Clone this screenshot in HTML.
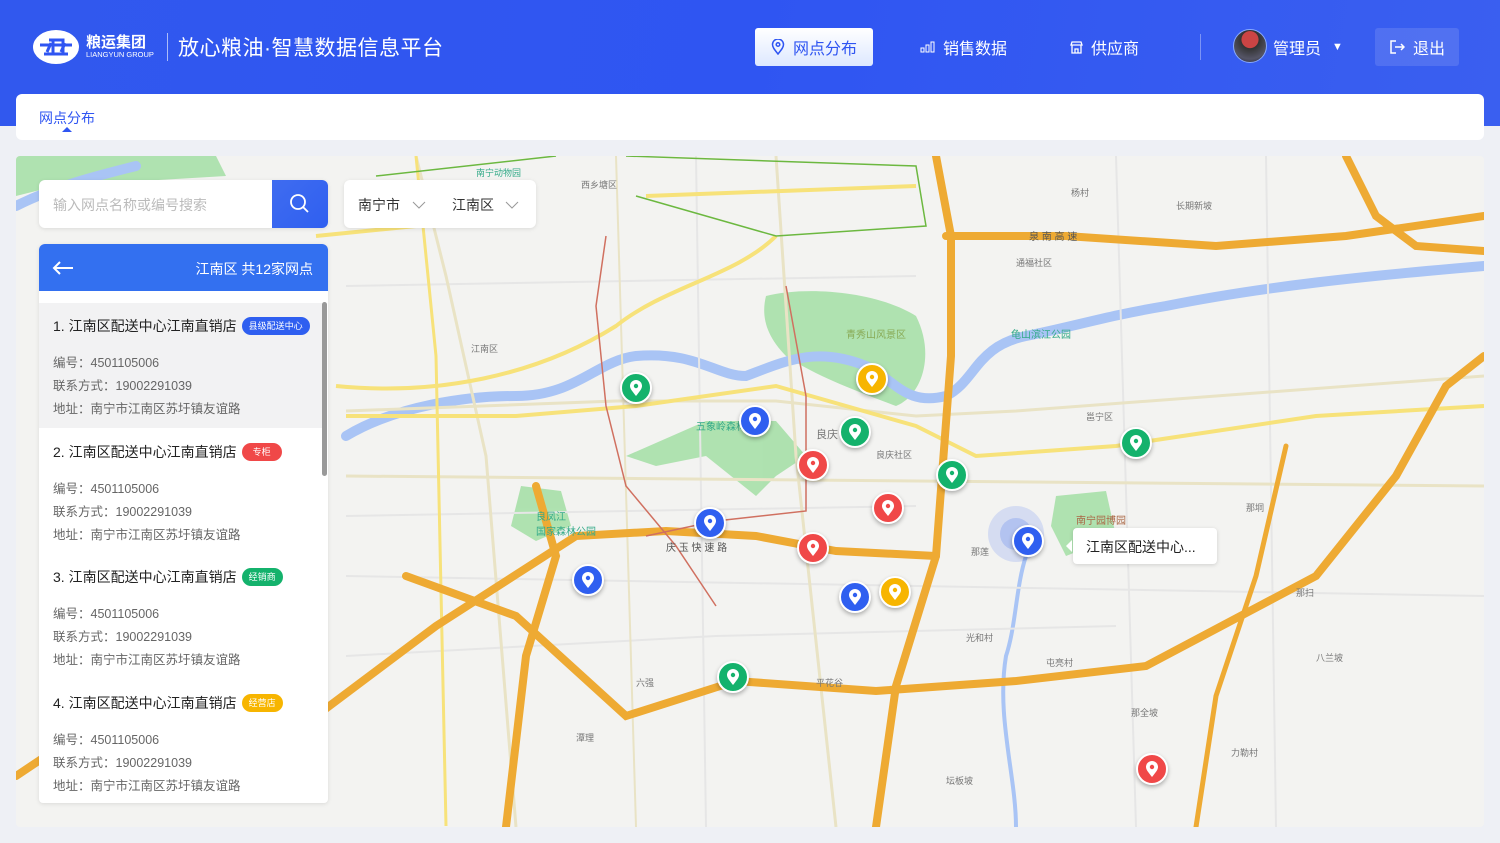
<!DOCTYPE html>
<html><head><meta charset="utf-8"><style>
*{margin:0;padding:0;box-sizing:border-box}
body{width:1500px;height:843px;overflow:hidden;background:#eef0f5;font-family:"Liberation Sans","Noto Sans CJK SC",sans-serif;position:relative}
.hdr{position:absolute;left:0;top:0;width:1500px;height:126px;background:linear-gradient(100deg,#3158ee 0%,#2f55f2 50%,#3a5ff0 100%)}
.logo{position:absolute;left:32px;top:28px;color:#fff}
.title{position:absolute;left:178px;top:32px;color:#fff;font-size:21px;letter-spacing:0.5px}
.sep{position:absolute;left:167px;top:33px;width:1px;height:28px;background:rgba(255,255,255,.6)}
.nav{position:absolute;top:28px;height:38px;color:#fff;font-size:16px;display:flex;align-items:center}
.tabbar{position:absolute;left:16px;top:94px;width:1468px;height:46px;background:#fff;border-radius:6px}
.map{position:absolute;left:16px;top:156px;width:1468px;height:671px;background:#f3f3f1;overflow:hidden;border-radius:4px}
.mk{position:absolute;width:32px;height:32px;border-radius:50%;border:2px solid #fff;box-shadow:0 2px 4px rgba(0,0,0,.3);display:flex;align-items:center;justify-content:center}
.g{background:#14b26c}.y{background:#f7b500}.b{background:#2f5ff0}.r{background:#f04848}
.item{position:absolute;left:39px;width:283px;padding-left:14px;color:#666;font-size:12.5px}
.item h4{font-size:14px;color:#222;font-weight:normal;display:flex;align-items:center}
.tag{display:inline-block;font-size:9px;color:#fff;border-radius:9px;padding:3px 7px;margin-left:5px;line-height:12px}
.item p{margin-top:8px;line-height:15px}
.lbl{position:absolute;font-size:9px;color:#777}
</style></head><body>
<div class="hdr"></div>
<div class="logo">
<svg width="50" height="38" viewBox="0 0 50 38"><ellipse cx="24" cy="19" rx="23" ry="17" fill="#fff"/><path d="M8 17h32M12 26h24M17 12h14v14M21 12v14M15 24l4-9M29 24l4-9" stroke="#2f55f2" stroke-width="3" fill="none"/></svg>
<div style="position:absolute;left:54px;top:3px;font-size:15px;font-weight:bold;white-space:nowrap">粮运集团</div>
<div style="position:absolute;left:54px;top:22px;font-size:7.5px;white-space:nowrap">LIANGYUN GROUP</div>
</div>
<div class="sep"></div>
<div class="title">放心粮油·智慧数据信息平台</div>
<div class="nav" style="left:755px;width:118px;background:linear-gradient(#fff,#dde8ff);border-radius:3px;color:#2f55f2;justify-content:center;font-size:16px">
<svg width="14" height="16" viewBox="0 0 14 16" style="margin-right:8px"><path d="M7 15C3 10 1.5 8 1.5 5.5a5.5 5.5 0 0 1 11 0C12.5 8 11 10 7 15z" fill="none" stroke="#2f55f2" stroke-width="1.5"/><circle cx="7" cy="5.5" r="1.8" fill="none" stroke="#2f55f2" stroke-width="1.5"/></svg>网点分布</div>
<div class="nav" style="left:920px"><svg width="16" height="12" style="margin-right:7px"><rect x="1" y="7" width="3" height="4" fill="none" stroke="#fff"/><rect x="6" y="4" width="3" height="7" fill="none" stroke="#fff"/><rect x="11" y="1" width="3" height="10" fill="none" stroke="#fff"/></svg>销售数据</div>
<div class="nav" style="left:1069px"><svg width="15" height="14" style="margin-right:7px"><path d="M2 5h11l-1-3H3zM3 5v8h9V5M6 13V9h3v4" fill="none" stroke="#fff" stroke-width="1.3"/></svg>供应商</div>
<div style="position:absolute;left:1200px;top:34px;width:1px;height:26px;background:rgba(255,255,255,.35)"></div>
<div style="position:absolute;left:1233px;top:29px;width:34px;height:34px;border-radius:50%;background:radial-gradient(circle at 50% 30%,#c44 0 30%,#333 32%,#556 70%,#223);border:1px solid #8af"></div>
<div class="nav" style="left:1273px">管理员<span style="font-size:11px;margin-left:11px">▼</span></div>
<div class="nav" style="left:1375px;width:84px;background:rgba(255,255,255,.12);border-radius:3px;justify-content:center"><svg width="16" height="16" style="margin-right:8px"><path d="M7 2H2v12h5M6 8h9M12 5l3 3-3 3" fill="none" stroke="#fff" stroke-width="1.5"/></svg>退出</div>
<div class="tabbar"><div style="position:absolute;left:23px;top:14px;font-size:14px;color:#2f55f2">网点分布</div><div style="position:absolute;left:46px;top:33px;width:0;height:0;border:5px solid transparent;border-bottom-color:#2f55f2;border-top:0"></div></div>

<div class="map">
<svg width="1468" height="671" style="position:absolute;left:0;top:0">
<g fill="#a7e0a8" opacity=".9">
<path d="M750 140 C790 130 860 135 900 160 C920 200 905 240 880 250 C840 235 800 220 770 200 C750 180 745 160 750 140z"/>
<path d="M610 300 L690 265 L760 265 L790 300 L760 320 L740 340 L690 300 L640 310z"/>
<path d="M505 330 L545 335 L555 370 L520 385 L495 370z"/>
<path d="M1040 340 L1090 335 L1100 380 L1050 400 L1035 370z"/>
<path d="M0 0 L200 0 L210 20 L40 30 L0 40z"/>
</g>
<g fill="none" stroke="#a9c4f5" stroke-width="10" stroke-linecap="round">
<path d="M330 280 C380 250 450 240 500 240 C560 240 580 205 620 200 C680 195 700 220 730 220 C770 205 800 190 850 210 C880 225 890 250 930 240 C960 225 960 190 1010 180 C1060 170 1090 160 1150 150 C1250 130 1350 120 1468 110"/>
<path d="M0 50 C40 30 80 20 120 10"/>
<path d="M1010 400 C1000 430 1000 470 990 500 C980 560 1000 620 1000 671" stroke-width="4"/>
</g>
<g fill="none" stroke="#e6e6e6" stroke-width="2">
<path d="M330 420 L1468 440"/><path d="M330 500 L700 480 L1100 470"/><path d="M1100 0 L1120 671"/><path d="M1250 0 L1260 671"/><path d="M680 0 L690 671"/><path d="M330 360 L900 350"/><path d="M330 130 L900 120"/>
</g>
<g fill="none" stroke="#e9e3c5" stroke-width="3">
<path d="M330 255 L600 245 L760 245 L900 260 L1000 255 L1468 220"/>
<path d="M400 0 L430 120 L470 300 L500 671"/>
<path d="M760 0 L780 300 L820 671"/>
<path d="M330 320 L1468 330"/>
<path d="M600 0 L620 671" stroke-width="2"/>
</g>
<g fill="none" stroke="#f7e27a" stroke-width="4">
<path d="M320 230 C420 240 520 220 600 170 C650 130 720 120 760 80"/>
<path d="M330 260 L500 260 L620 250 L760 230 L900 270 L960 300 L1100 290 L1300 260 L1468 250"/>
<path d="M400 0 L420 200 L430 670" stroke-width="3"/>
<path d="M630 40 L900 30"/>
<path d="M300 80 L400 70 L480 60"/>
</g>
<g fill="none" stroke="#eeaa33" stroke-width="8" stroke-linecap="round">
<path d="M920 0 L935 80 L935 200 L920 400 L880 530 L860 671"/>
<path d="M930 80 L1050 80 L1200 90 L1330 80 L1468 60"/>
<path d="M300 560 L420 470 L560 380 L650 375 L740 380 L820 395 L920 400"/>
<path d="M390 420 L500 460 L610 560 L720 525 L860 535 L1000 525 L1130 510 L1300 420 L1380 320 L1430 230 L1468 200"/>
<path d="M1330 0 L1360 60 L1400 90 L1468 95"/>
<path d="M520 330 L540 400 L510 500 L490 671"/>
<path d="M0 620 L120 540 L200 460 L300 380"/>
<path d="M1270 290 L1240 420 L1200 540 L1180 671" stroke-width="5"/>
</g>
<g fill="none" stroke="#d07060" stroke-width="1.5">
<path d="M590 80 L580 150 L590 250 L610 330 L660 390 L700 450"/>
<path d="M770 130 L790 240 L790 310 L790 355 L700 365 L630 380"/>
</g>
<g fill="none" stroke="#6cb840" stroke-width="1.5"><path d="M360 20 L540 0 M610 0 L900 10 L910 70 L760 80 L620 40"/></g>
</svg>
<div class="lbl" style="left:455px;top:186px">江南区</div>
<div class="lbl" style="left:830px;top:170px;color:#8a5;font-size:10px">青秀山风景区</div>
<div class="lbl" style="left:995px;top:170px;color:#3a8;font-size:10px">龟山滨江公园</div>
<div class="lbl" style="left:680px;top:262px;color:#3a8;font-size:10px">五象岭森林公园</div>
<div class="lbl" style="left:800px;top:270px;font-size:11px">良庆</div>
<div class="lbl" style="left:860px;top:292px">良庆社区</div>
<div class="lbl" style="left:1060px;top:356px;color:#a64;font-size:10px">南宁园博园</div>
<div class="lbl" style="left:520px;top:352px;color:#3a8;font-size:10px">良凤江<br>国家森林公园</div>
<div class="lbl" style="left:650px;top:383px;font-size:10px;color:#555">庆 玉 快 速 路</div>
<div class="lbl" style="left:955px;top:389px">那莲</div>
<div class="lbl" style="left:1000px;top:100px">通福社区</div>
<div class="lbl" style="left:1013px;top:72px;font-size:10px;color:#555">泉 南 高 速</div>
<div class="lbl" style="left:1070px;top:254px">邕宁区</div>
<div class="lbl" style="left:565px;top:22px">西乡塘区</div>
<div class="lbl" style="left:460px;top:10px;color:#3a8">南宁动物园</div>
<div class="lbl" style="left:1230px;top:345px">那垌</div>
<div class="lbl" style="left:1280px;top:430px">那扫</div>
<div class="lbl" style="left:1300px;top:495px">八兰坡</div>
<div class="lbl" style="left:1030px;top:500px">屯亮村</div>
<div class="lbl" style="left:950px;top:475px">光和村</div>
<div class="lbl" style="left:800px;top:520px">平花谷</div>
<div class="lbl" style="left:620px;top:520px">六强</div>
<div class="lbl" style="left:560px;top:575px">潭理</div>
<div class="lbl" style="left:1115px;top:550px">那全坡</div>
<div class="lbl" style="left:1215px;top:590px">力勒村</div>
<div class="lbl" style="left:930px;top:618px">坛板坡</div>
<div class="lbl" style="left:1055px;top:30px">杨村</div>
<div class="lbl" style="left:1160px;top:43px">长期新坡</div>

<div style="position:absolute;left:972px;top:350px;width:56px;height:56px;border-radius:50%;background:rgba(47,95,240,.15)"></div>
<div style="position:absolute;left:984px;top:362px;width:32px;height:32px;border-radius:50%;background:rgba(47,95,240,.2)"></div>
<div style="position:absolute;left:1057px;top:372px;width:144px;height:36px;background:#fff;border-radius:4px;box-shadow:0 1px 4px rgba(0,0,0,.15);font-size:14px;color:#222;padding:9px 0 0 13px">江南区配送中心...</div>
<div style="position:absolute;left:1050px;top:384px;width:0;height:0;border:6px solid transparent;border-right-color:#fff;border-left:0"></div>
</div>

<div id="mks"></div>

<div style="position:absolute;left:39px;top:180px;width:289px;height:48px;background:#fff;border-radius:6px;box-shadow:0 1px 4px rgba(0,0,0,.1)"><div style="position:absolute;left:14px;top:15px;font-size:14px;color:#bbb">输入网点名称或编号搜索</div>
<div style="position:absolute;left:233px;top:0;width:56px;height:48px;background:linear-gradient(135deg,#3f6cf0,#2f5ff0);border-radius:0 6px 6px 0"><svg width="22" height="22" style="position:absolute;left:17px;top:13px"><circle cx="9" cy="9" r="7" fill="none" stroke="#fff" stroke-width="1.8"/><path d="M14 14l5 5" stroke="#fff" stroke-width="1.8"/></svg></div></div>
<div style="position:absolute;left:344px;top:180px;width:192px;height:48px;background:#fff;border-radius:6px;box-shadow:0 1px 4px rgba(0,0,0,.1);font-size:14px;color:#333">
<span style="position:absolute;left:14px;top:15px">南宁市</span><svg width="14" height="8" style="position:absolute;left:68px;top:21px"><path d="M1 1l6 6 6-6" fill="none" stroke="#999"/></svg>
<span style="position:absolute;left:108px;top:15px">江南区</span><svg width="14" height="8" style="position:absolute;left:161px;top:21px"><path d="M1 1l6 6 6-6" fill="none" stroke="#999"/></svg></div>

<div style="position:absolute;left:39px;top:244px;width:289px;height:559px;background:#fff;border-radius:6px 6px 4px 4px;box-shadow:0 1px 4px rgba(0,0,0,.1);overflow:hidden">
<div style="height:47px;background:#3370f0;color:#fff;font-size:14px;position:relative"><svg width="22" height="16" style="position:absolute;left:13px;top:16px"><path d="M21 8H2M8 2L2 8l6 6" fill="none" stroke="#fff" stroke-width="2"/></svg><span style="position:absolute;right:15px;top:15px">江南区 共12家网点</span></div>
<div style="position:absolute;left:0;top:59px;width:283px;height:125px;background:#f2f2f3"></div>
<div style="position:absolute;left:283px;top:58px;width:5px;height:174px;background:#999;border-radius:3px"></div>
</div>
<div class="item" style="top:316px"><h4>1. 江南区配送中心江南直销店<span class="tag" style="background:#2f5ff0">县级配送中心</span></h4><p style="margin-top:20px">编号：4501105006</p><p>联系方式：19002291039</p><p>地址：南宁市江南区苏圩镇友谊路</p></div>
<div class="item" style="top:442px"><h4>2. 江南区配送中心江南直销店<span class="tag" style="background:#f04848;padding:3px 11px">专柜</span></h4><p style="margin-top:20px">编号：4501105006</p><p>联系方式：19002291039</p><p>地址：南宁市江南区苏圩镇友谊路</p></div>
<div class="item" style="top:567px"><h4>3. 江南区配送中心江南直销店<span class="tag" style="background:#14b26c">经销商</span></h4><p style="margin-top:20px">编号：4501105006</p><p>联系方式：19002291039</p><p>地址：南宁市江南区苏圩镇友谊路</p></div>
<div class="item" style="top:693px"><h4>4. 江南区配送中心江南直销店<span class="tag" style="background:#f7b500">经营店</span></h4><p style="margin-top:20px">编号：4501105006</p><p>联系方式：19002291039</p><p>地址：南宁市江南区苏圩镇友谊路</p></div>

<script>
var m=[["g",636,388],["y",872,379],["b",755,421],["g",855,432],["r",813,465],["g",952,475],["r",888,508],["g",1136,443],["b",710,523],["r",813,548],["b",1028,541],["b",588,580],["b",855,597],["y",895,592],["g",733,677],["r",1152,769]];
var cs={g:"#14b26c",y:"#f7b500",b:"#2f5ff0",r:"#f04848"};
var h="";m.forEach(function(a){h+='<div class="mk '+a[0]+'" style="left:'+(a[1]-16)+'px;top:'+(a[2]-16)+'px"><svg width="14" height="17" viewBox="0 0 14 17"><path d="M7 16C3 11 1 8.5 1 6a6 6 0 0 1 12 0c0 2.5-2 5-6 10z" fill="#fff"/><circle cx="7" cy="6" r="2.2" fill="'+cs[a[0]]+'"/></svg></div>';});
document.getElementById("mks").innerHTML=h;
</script>
</body></html>
